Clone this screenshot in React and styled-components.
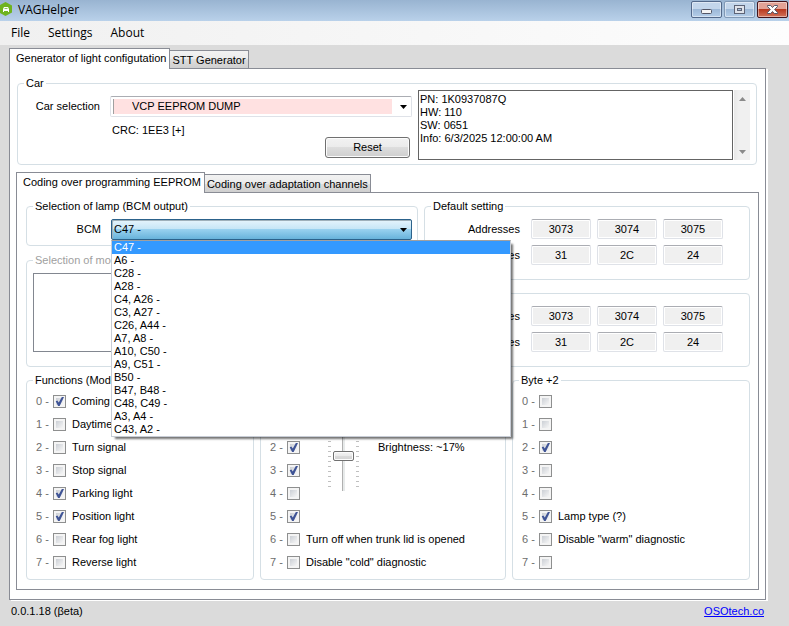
import { useState } from "react";
import styled, { createGlobalStyle, css } from "styled-components";

const GlobalStyle = createGlobalStyle`
    * {
        box-sizing: border-box;
    }
    body {
        margin: 0;
        background: #dbdbdb;
        color: #000;
        font-family: "Liberation Sans", Arial, sans-serif;
        font-size: 11px;
        line-height: 13px;
    }
    button,
    input,
    select,
    textarea {
        margin: 0;
        font: inherit;
        color: inherit;
    }
`;

const Window = styled.div`
    display: flex;
    flex-direction: column;
    min-height: 100vh;
`;

/* title bar */

const TitleBar = styled.header`
    display: flex;
    align-items: flex-start;
    height: 21px;
    padding-right: 1px;
    background: linear-gradient(#99b4d1, #b9d1ea);
    font-family: "Open Sans", "Noto Sans", sans-serif;
    overflow: hidden;
`;

const AppIcon = styled.svg`
    flex: none;
    width: 12px;
    height: 14px;
    margin-top: 2px;
`;

const AppTitle = styled.h1`
    flex: 1;
    margin: 0;
    padding-left: 6px;
    font-size: 12px;
    font-weight: 400;
    line-height: 19px;
`;

const Controls = styled.div`
    display: flex;
    gap: 2px;
    padding-top: 1px;
`;

const ControlButton = styled.button`
    width: 31px;
    height: 17px;
    padding: 0;
    border: 1px solid ${(p) => (p.$muted ? "#8199b5" : "#53698a")};
    border-radius: 2px;
    background: linear-gradient(#c3d6eb 0 45%, #9db9d8 50%, #b4cde8);
    box-shadow: inset 0 0 0 1px rgba(255, 255, 255, 0.45);

    svg {
        display: block;
        margin: 0 auto;
    }

    ${(p) =>
        p.$close &&
        css`
            border-color: #43141b;
            background: linear-gradient(#e3a396 0 45%, #b93a20 50%, #d2735a);
        `}
`;

/* menu */

const MenuBar = styled.nav`
    display: flex;
    gap: 2px;
    height: 24px;
    padding: 0 3px;
    background: linear-gradient(90deg, #f0f0f0, #fdfdfd);
`;

const MenuButton = styled.button`
    padding: 0 8px;
    border: 0;
    background: none;
    font-family: "Open Sans", "Noto Sans", sans-serif;
    font-size: 12px;
    line-height: 24px;
`;

/* tabs */

const Main = styled.main`
    padding: 3px 23px 0 9px;
`;

const TabStrip = styled.div`
    display: flex;
    align-items: flex-end;
    height: 20px;
`;

const Tab = styled.button`
    height: 18px;
    padding: 0 2px;
    border: 1px solid #898c95;
    border-bottom: 0;
    border-left-width: 0;
    background: linear-gradient(#f2f2f2, #ebebeb 50%, #dddddd 50%, #cfcfcf);
    line-height: 18px;
    white-space: nowrap;

    ${(p) =>
        p.$active &&
        css`
            position: relative;
            height: 21px;
            margin-bottom: -1px;
            padding: 0 3px 2px 6px;
            border-left-width: 1px;
            background: #fff;
        `}
`;

const OuterPanel = styled.section`
    padding: 8px 6px 9px;
    border: 1px solid #898c95;
    background: #fff;
    box-shadow: 2px 1px 0 #fff;
`;

const InnerPanel = styled.section`
    display: flex;
    flex-direction: column;
    gap: 7px;
    padding: 7px 8px 9px 9px;
    border: 1px solid #898c95;
`;

/* group boxes */

const Group = styled.fieldset`
    min-width: 0;
    margin: 0;
    padding: 0;
    border: 1px solid #d5dfe5;
    border-radius: 4px;

    legend {
        margin-left: 6px;
        padding: 0 2px;
        color: ${(p) => (p.$disabled ? "#a0a0a0" : "#000")};
    }
`;

const CarGroup = styled(Group)`
    margin: 0 2px 7px 1px;
`;

const CarBody = styled.div`
    display: grid;
    grid-template-columns: 82px minmax(0, 318fr) minmax(0, 332fr);
    padding-right: 6px;
    height: 74px;
`;

const FieldLabel = styled.label`
    text-align: right;
    line-height: 21px;
`;

const CarFields = styled.div`
    display: flex;
    flex-direction: column;
    padding: 6px 0 6px 10px;
    margin-right: 6px;
`;

const CarLabel = styled(FieldLabel)`
    padding-top: 6px;
`;

const Crc = styled.span`
    padding: 7px 0 0 2px;
`;

const ResetButton = styled.button`
    align-self: flex-end;
    width: 85px;
    height: 21px;
    margin-right: 2px;
    padding: 0;
    border: 1px solid #707070;
    border-radius: 3px;
    background: linear-gradient(#f2f2f2, #ebebeb 50%, #dddddd 50%, #cfcfcf);
    box-shadow: inset 0 0 0 1px #fcfcfc;
`;

const SelectWrap = styled.div`
    position: relative;
    min-width: 0;
`;

const Select = styled.select`
    display: block;
    width: 100%;
    height: 21px;
    padding: 0 20px 0 2px;
    border: 1px solid #dfe2e8;
    border-top-color: #abadb3;
    border-radius: 2px;
    background: #fff;
    appearance: none;
    outline: 0;

    ${(p) =>
        p.$pink &&
        css`
            padding-left: 21px;
            background:
                linear-gradient(#a0a0a0, #a0a0a0) 2px 2px / 1px 15px no-repeat,
                linear-gradient(#ffe1e1, #ffe1e1) 3px 2px / calc(100% - 22px) 15px no-repeat,
                #fff;
        `}

    ${(p) =>
        p.$open &&
        css`
            border-color: #2c628b;
            background: linear-gradient(#e5f4fc, #c4e5f6 50%, #98d1ef 50%, #68b3db);
            box-shadow: inset 1px 1px 0 #9eb0ba;
        `}
`;

const SelectArrow = styled.svg`
    position: absolute;
    right: 5px;
    top: 9px;
    pointer-events: none;
`;

const DropList = styled.ul`
    position: absolute;
    z-index: 5;
    top: 100%;
    left: 0;
    width: 400px;
    margin: 0;
    padding: 0;
    border: 1px solid #c8cdd6;
    border-top-color: #a0a0a0;
    background: #fff;
    box-shadow: 3px 3px 2px -1px rgba(0, 0, 0, 0.55);
    list-style: none;
`;

const DropItem = styled.li`
    height: 13px;
    padding-left: 2px;
    background: ${(p) => (p.$selected ? "#3399ff" : "transparent")};
    color: ${(p) => (p.$selected ? "#fff" : "#000")};
`;

const InfoBox = styled.div`
    display: flex;
    gap: 1px;
    height: 70px;
`;

const InfoText = styled.textarea`
    flex: 1;
    min-width: 0;
    padding: 2px 1px;
    border: 1px solid #646464;
    background: #fff;
    resize: none;
    overflow: hidden;
    outline: 0;
`;

const ScrollBar = styled.div`
    display: flex;
    flex-direction: column;
    justify-content: space-between;
    align-items: center;
    width: 16px;
    padding: 7px 0 6px;
    background: linear-gradient(90deg, #e8e8e8, #f0f0f0 30%, #f0f0f0);
`;

/* upper half of the coding page */

const Upper = styled.div`
    display: grid;
    grid-template-columns: minmax(0, 392fr) minmax(0, 326fr);
    gap: 6px;
`;

const Column = styled.div`
    display: flex;
    flex-direction: column;
    gap: ${(p) => p.$gap}px;
`;

const LampBody = styled.div`
    display: grid;
    grid-template-columns: 74px minmax(0, 1fr);
    gap: 10px;
    padding: 6px 5px 5px 0;
`;

const ModeBody = styled.div`
    padding: 6px;
    padding-bottom: 14px;
`;

const ModeList = styled.div`
    height: 79px;
    border: 1px solid #828790;
`;

const SettingBody = styled.div`
    display: flex;
    flex-direction: column;
    gap: 6px;
    padding: 6px 26px 14px 0;
`;

const SettingRow = styled.div`
    display: flex;
    justify-content: flex-end;
    gap: 6px;
    line-height: 20px;
`;

const SettingName = styled.span`
    padding-right: 5px;
`;

const HexInput = styled.input`
    width: 60px;
    height: 20px;
    padding: 0;
    border: 1px solid #dfe2e8;
    border-top-color: #abadb3;
    border-radius: 2px;
    background: #f0f0f0;
    box-shadow: inset 0 0 0 1px #fff;
    text-align: center;
    outline: 0;
`;

/* bit lists */

const Lower = styled.div`
    display: grid;
    grid-template-columns: minmax(0, 228fr) minmax(0, 246fr) minmax(0, 238fr);
    gap: 6px;
`;

const BitGrid = styled.div`
    display: grid;
    grid-template-columns: 67px 50px 1fr;
    grid-template-rows: repeat(8, 23px);
    padding: 3px 0 5px;
`;

const BitRow = styled.label`
    grid-column: 1 / -1;
    grid-row: ${(p) => p.$row};
    display: flex;
    align-items: center;
    padding-left: 9px;
    white-space: nowrap;
`;

const BitNumber = styled.span`
    width: 17px;
    color: #6d6d6d;
`;

const CheckBox = styled.input`
    position: relative;
    width: 13px;
    height: 13px;
    margin-right: 6px;
    border: 1px solid #8e8f8f;
    background: linear-gradient(135deg, #cbcfd5, #f6f6f6) content-box, #f4f4f4;
    padding: 2px;
    appearance: none;

    &:checked::after {
        content: "";
        position: absolute;
        inset: 1px;
        background: #3f5496;
        clip-path: polygon(8% 48%, 26% 40%, 42% 62%, 76% 0, 100% 0, 52% 100%, 34% 100%);
    }
`;

const SliderBox = styled.div`
    grid-column: 2;
    grid-row: 1 / 6;
    display: flex;
    gap: 2px;
    height: 96px;
    margin-top: 5px;
`;

const Ticks = styled.span`
    width: 3px;
    height: 92px;
    background: repeating-linear-gradient(to top, #c0c0c0 0 1px, transparent 1px 5px);
`;

const Slider = styled.input`
    width: 21px;
    height: 96px;
    appearance: none;
    writing-mode: vertical-lr;
    direction: rtl;
    background: linear-gradient(90deg, #b0b0b0 0 1px, #e7eaea 1px) 9px 0 / 3px 100% no-repeat;

    &::-webkit-slider-thumb {
        appearance: none;
        width: 21px;
        height: 10px;
        border: 1px solid #707070;
        border-radius: 2px;
        background: linear-gradient(#f4f4f4, #e9e9e9 50%, #dcdcdc 50%, #d2d2d2);
        box-shadow: inset 0 0 0 1px #fcfcfc;
    }
`;

const Brightness = styled.span`
    grid-column: 3;
    grid-row: 3;
    align-self: center;
`;

const StatusBar = styled.footer`
    display: flex;
    justify-content: space-between;
    padding: 5px 25px 8px 11px;

    a {
        color: #0000ff;
    }
`;

const lamps = [
    "C47 -",
    "A6 -",
    "C28 -",
    "A28 -",
    "C4, A26 -",
    "C3, A27 -",
    "C26, A44 -",
    "A7, A8 -",
    "A10, C50 -",
    "A9, C51 -",
    "B50 -",
    "B47, B48 -",
    "C48, C49 -",
    "A3, A4 -",
    "C43, A2 -",
];

const functionNames = [
    "Coming home",
    "Daytime light",
    "Turn signal",
    "Stop signal",
    "Parking light",
    "Position light",
    "Rear fog light",
    "Reverse light",
];

const byte1Names = ["", "", "", "", "", "", "Turn off when trunk lid is opened", 'Disable "cold" diagnostic'];
const byte2Names = ["", "", "", "", "", "Lamp type (?)", 'Disable "warm" diagnostic', ""];

const info = "PN: 1K0937087Q\nHW: 110\nSW: 0651\nInfo: 6/3/2025 12:00:00 AM";

const addresses = ["3073", "3074", "3075"];
const values = ["31", "2C", "24"];

function Arrow() {
    return (
        <SelectArrow width="7" height="4" viewBox="0 0 7 4">
            <path d="M0 0h7L3.500 4z" />
        </SelectArrow>
    );
}

function Bits({ names, value, children }) {
    const [byte, setByte] = useState(value);

    return (
        <BitGrid>
            {names.map((name, bit) => (
                <BitRow key={bit} $row={bit + 1}>
                    <BitNumber>{bit} -</BitNumber>
                    <CheckBox
                        type="checkbox"
                        checked={Boolean(byte & (1 << bit))}
                        onChange={() => setByte(byte ^ (1 << bit))}
                    />
                    {name}
                </BitRow>
            ))}
            {children}
        </BitGrid>
    );
}

function Setting({ title }) {
    return (
        <Group>
            <legend>{title}</legend>
            <SettingBody>
                <SettingRow>
                    <SettingName>Addresses</SettingName>
                    {addresses.map((a) => (
                        <HexInput key={a} aria-label={`${title} address`} value={a} readOnly />
                    ))}
                </SettingRow>
                <SettingRow>
                    <SettingName>Values</SettingName>
                    {values.map((v) => (
                        <HexInput key={v} aria-label={`${title} value`} value={v} readOnly />
                    ))}
                </SettingRow>
            </SettingBody>
        </Group>
    );
}

export default function App() {
    const [lamp, setLamp] = useState(lamps[0]);
    const [level, setLevel] = useState(44);

    return (
        <Window>
            <GlobalStyle />
            <TitleBar>
                <AppIcon viewBox="0 0 12 14">
                    <path d="M5.500 0L12 3.500v7L5.500 14 0 11V3z" fill="#6fb320" />
                    <path d="M4 5h4l1 2v3H8V9H4v1H3V7z" fill="#fff" />
                    <path d="M4.500 6h3v1h-3z" fill="#8fc653" />
                </AppIcon>
                <AppTitle>VAGHelper</AppTitle>
                <Controls>
                    <ControlButton aria-label="Minimize">
                        <svg width="13" height="13" viewBox="0 0 13 13">
                            <rect x="1.500" y="6.500" width="10" height="4" rx="1" fill="#f4f4f4" stroke="#535666" />
                        </svg>
                    </ControlButton>
                    <ControlButton aria-label="Maximize" $muted>
                        <svg width="13" height="13" viewBox="0 0 13 13">
                            <rect x="1.500" y="2.500" width="10" height="8" fill="#dfe3ea" stroke="#5d6477" />
                            <rect x="4.500" y="5.500" width="4" height="2" fill="#a9c2de" stroke="#5d6477" />
                        </svg>
                    </ControlButton>
                    <ControlButton aria-label="Close" $close>
                        <svg width="13" height="13" viewBox="0 0 13 13">
                            <path
                                d="M1.500 2.500h3.200l1.800 2 1.800-2h3.200v1L8.700 6.500l2.800 3v1H8.300l-1.800-2-1.800 2H1.500v-1l2.800-3-2.800-3z"
                                fill="#fff"
                                stroke="#535666"
                            />
                        </svg>
                    </ControlButton>
                </Controls>
            </TitleBar>

            <MenuBar>
                <MenuButton>File</MenuButton>
                <MenuButton>Settings</MenuButton>
                <MenuButton>About</MenuButton>
            </MenuBar>

            <Main>
                <TabStrip role="tablist">
                    <Tab role="tab" aria-selected="true" $active>
                        Generator of light configutation
                    </Tab>
                    <Tab role="tab">STT Generator</Tab>
                </TabStrip>
                <OuterPanel>
                    <CarGroup>
                        <legend>Car</legend>
                        <CarBody>
                            <CarLabel htmlFor="car">Car selection</CarLabel>
                            <CarFields>
                                <SelectWrap>
                                    <Select id="car" $pink>
                                        <option>VCP EEPROM DUMP</option>
                                    </Select>
                                    <Arrow />
                                </SelectWrap>
                                <Crc>CRC: 1EE3 [+]</Crc>
                                <ResetButton>Reset</ResetButton>
                            </CarFields>
                            <InfoBox>
                                <InfoText aria-label="Module info" value={info} readOnly />
                                <ScrollBar>
                                    <svg width="7" height="4" viewBox="0 0 7 4">
                                        <path d="M0 4h7L3.500 0z" fill="#8a8a8a" />
                                    </svg>
                                    <svg width="7" height="4" viewBox="0 0 7 4">
                                        <path d="M0 0h7L3.500 4z" fill="#8a8a8a" />
                                    </svg>
                                </ScrollBar>
                            </InfoBox>
                        </CarBody>
                    </CarGroup>

                    <TabStrip role="tablist">
                        <Tab role="tab" aria-selected="true" $active>
                            Coding over programming EEPROM
                        </Tab>
                        <Tab role="tab">Coding over adaptation channels</Tab>
                    </TabStrip>
                    <InnerPanel>
                        <Upper>
                            <Column $gap={8}>
                                <Group>
                                    <legend>Selection of lamp (BCM output)</legend>
                                    <LampBody>
                                        <FieldLabel htmlFor="bcm">BCM</FieldLabel>
                                        <SelectWrap>
                                            <Select
                                                id="bcm"
                                                value={lamp}
                                                onChange={(e) => setLamp(e.target.value)}
                                                $open
                                            >
                                                {lamps.map((l) => (
                                                    <option key={l}>{l}</option>
                                                ))}
                                            </Select>
                                            <Arrow />
                                            <DropList role="listbox" aria-label="BCM">
                                                {lamps.map((l) => (
                                                    <DropItem
                                                        key={l}
                                                        role="option"
                                                        aria-selected={l === lamp}
                                                        $selected={l === lamp}
                                                        onClick={() => setLamp(l)}
                                                    >
                                                        {l}
                                                    </DropItem>
                                                ))}
                                            </DropList>
                                        </SelectWrap>
                                    </LampBody>
                                </Group>
                                <Group $disabled>
                                    <legend>Selection of mode</legend>
                                    <ModeBody>
                                        <ModeList />
                                    </ModeBody>
                                </Group>
                            </Column>
                            <Column $gap={7}>
                                <Setting title="Default setting" />
                                <Setting title="New setting" />
                            </Column>
                        </Upper>

                        <Lower>
                            <Group>
                                <legend>Functions (Mode)</legend>
                                <Bits names={functionNames} value={0x31} />
                            </Group>
                            <Group>
                                <legend>Byte +1</legend>
                                <Bits names={byte1Names} value={0x2c}>
                                    <SliderBox>
                                        <Ticks />
                                        <Slider
                                            type="range"
                                            aria-label="Brightness"
                                            min="0"
                                            max="127"
                                            value={level}
                                            onChange={(e) => setLevel(Number(e.target.value))}
                                        />
                                        <Ticks />
                                    </SliderBox>
                                    <Brightness>Brightness: ~{Math.round((level / 255) * 100)}%</Brightness>
                                </Bits>
                            </Group>
                            <Group>
                                <legend>Byte +2</legend>
                                <Bits names={byte2Names} value={0x24} />
                            </Group>
                        </Lower>
                    </InnerPanel>
                </OuterPanel>
            </Main>

            <StatusBar>
                <span>0.0.1.18 (βeta)</span>
                <a href="#osotech">OSOtech.co</a>
            </StatusBar>
        </Window>
    );
}
